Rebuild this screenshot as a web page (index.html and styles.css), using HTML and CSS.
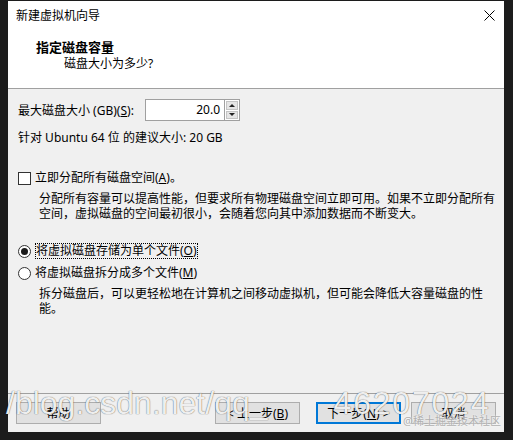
FILE: index.html
```
<!DOCTYPE html>
<html lang="zh-CN">
<head>
<meta charset="UTF-8">
<title>新建虚拟机向导</title>
<link rel="stylesheet" href="styles.css">
</head>
<body>

<div class="window">
    <div class="titlebar">
        <span class="title">新建虚拟机向导</span>
        <svg class="close" width="11" height="11" viewBox="0 0 11 11">
            <path d="M0.5 0.5 L10.5 10.5 M10.5 0.5 L0.5 10.5" stroke="#000" stroke-width="1" fill="none"/>
        </svg>
    </div>
    <div class="header">
        <div class="heading">指定磁盘容量</div>
        <div class="subheading">磁盘大小为多少?</div>
    </div>
    <div class="content">
        <div class="size-row">
            <span class="size-label">最大磁盘大小 (GB)(<u>S</u>):</span>
            <div class="spin-input">20.0</div>
            <div class="spin-buttons">
                <span class="spin-btn"><span class="arrow-up"></span></span>
                <span class="spin-btn"><span class="arrow-down"></span></span>
            </div>
        </div>
        <div class="hint">针对 Ubuntu 64 位 的建议大小: 20 GB</div>

        <div class="option option-check">
            <span class="checkbox"></span>立即分配所有磁盘空间(<u>A</u>)。
        </div>
        <div class="desc">分配所有容量可以提高性能，但要求所有物理磁盘空间立即可用。如果不立即分配所有<br>空间，虚拟磁盘的空间最初很小，会随着您向其中添加数据而不断变大。</div>

        <div class="option option-first">
            <span class="radio checked"></span><span class="focus">将虚拟磁盘存储为单个文件(<u>O</u>)</span>
        </div>
        <div class="option option-second">
            <span class="radio"></span>将虚拟磁盘拆分成多个文件(<u>M</u>)
        </div>
        <div class="desc">拆分磁盘后，可以更轻松地在计算机之间移动虚拟机，但可能会降低大容量磁盘的性<br>能。</div>
    </div>
    <div class="footer">
        <button class="btn">帮助</button>
        <div class="spacer"></div>
        <button class="btn">&lt; 上一步(<u>B</u>)</button>
        <button class="btn btn-primary">下一步(<u>N</u>) &gt;</button>
        <button class="btn btn-cancel">取消</button>
    </div>
</div>

<!-- watermark from the original screenshot -->
<div class="watermark">/blog.csdn.net/qq_<span class="wm-id">46207024</span></div>
<div class="credit">@稀土掘金技术社区</div>

</body>
</html>
```

FILE: styles.css
```
body {
    margin: 0;
    width: 513px;
    height: 440px;
    background: #1c1c1c;
    font-family: "Noto Sans", "Noto Sans CJK SC", sans-serif;
    font-size: 12px;
    color: #000;
    position: relative;
    overflow: hidden;
}
.window {
    margin: 1px 0 0 8px;
    width: 496px;
    height: 431px;
    background: #f0f0f0;
    display: flex;
    flex-direction: column;
}
.titlebar {
    height: 29px;
    background: #fff;
    display: flex;
    justify-content: space-between;
    align-items: center;
    padding: 0 9px 0 8px;
}
.title {
    line-height: 16px;
    color: #000;
}
.close {
    display: block;
}
.header {
    background: #fff;
    padding: 9px 0 16px 0;
    border-bottom: 1px solid #a0a0a0;
}
.heading {
    padding-left: 28px;
    font-size: 13px;
    font-weight: bold;
    line-height: 17px;
}
.subheading {
    padding-left: 56px;
    line-height: 16px;
}
.content {
    padding: 10px 5px 0 10px;
}
.size-row {
    display: flex;
    align-items: center;
    height: 22px;
}
.size-label {
    width: 127px;
}
.spin-input {
    width: 80px;
    height: 22px;
    box-sizing: border-box;
    border: 1px solid #a0a0a0;
    background: #fff;
    text-align: right;
    padding-right: 4px;
    line-height: 20px;
}
.spin-buttons {
    width: 15px;
    height: 22px;
    display: flex;
    flex-direction: column;
    box-sizing: border-box;
    border: 1px solid #a0a0a0;
    border-left: none;
    background: #fff;
    padding: 1px;
    gap: 1px;
}
.spin-btn {
    flex: 1;
    background: #e5e5e5;
    border: 1px solid #c4c4c4;
    display: flex;
    align-items: center;
    justify-content: center;
}
.arrow-up {
    border-left: 3px solid transparent;
    border-right: 3px solid transparent;
    border-bottom: 3px solid #222;
}
.arrow-down {
    border-left: 3px solid transparent;
    border-right: 3px solid transparent;
    border-top: 3px solid #222;
}
.hint {
    margin-top: 9px;
    line-height: 16px;
}
.option {
    display: flex;
    align-items: center;
    line-height: 16px;
}
.option-check {
    margin-top: 24px;
}
.option-first {
    margin-top: 22px;
}
.option-second {
    margin-top: 6px;
}
.checkbox {
    width: 11px;
    height: 11px;
    border: 1px solid #333;
    background: #fff;
    margin-right: 4px;
}
.radio {
    width: 11px;
    height: 11px;
    border: 1px solid #333;
    border-radius: 50%;
    background: #fff;
    margin-right: 4px;
    display: flex;
    align-items: center;
    justify-content: center;
}
.radio.checked::after {
    content: "";
    width: 7px;
    height: 7px;
    border-radius: 50%;
    background: #1a1a1a;
}
.focus {
    outline: 1px dotted #000;
    outline-offset: -1px;
    padding: 0 1px;
}
.desc {
    margin-top: 5px;
    padding-left: 21px;
    line-height: 15px;
}
.footer {
    margin-top: auto;
    border-top: 1px solid #a0a0a0;
    padding: 8px 8px 8px 8px;
    display: flex;
    align-items: center;
}
.spacer {
    flex: 1;
}
.btn {
    width: 85px;
    height: 22px;
    font-family: inherit;
    font-size: 12px;
    color: #000;
    background: #e1e1e1;
    border: 1px solid #adadad;
    padding: 0;
    margin: 0;
}
.btn-primary {
    margin-left: 16px;
    border-color: #0078d7;
    box-shadow: inset 0 0 0 1px #0078d7;
}
.btn-cancel {
    margin-left: 10px;
}
.watermark {
    position: absolute;
    left: 6px;
    top: 384px;
    font-family: "Liberation Sans", Arial, sans-serif;
    font-size: 32px;
    line-height: 38px;
    color: rgba(255, 255, 255, 0.92);
    text-shadow: 0 0 1px rgba(0, 0, 0, 0.55), 0 0 1px rgba(0, 0, 0, 0.3);
    white-space: nowrap;
}
.wm-id {
    margin-left: 66px;
    letter-spacing: 1.8px;
}
.credit {
    position: absolute;
    left: 403px;
    top: 413px;
    font-size: 11px;
    line-height: 16px;
    color: #b0b0b0;
    text-shadow: 0 0 2px #fff;
}
```
